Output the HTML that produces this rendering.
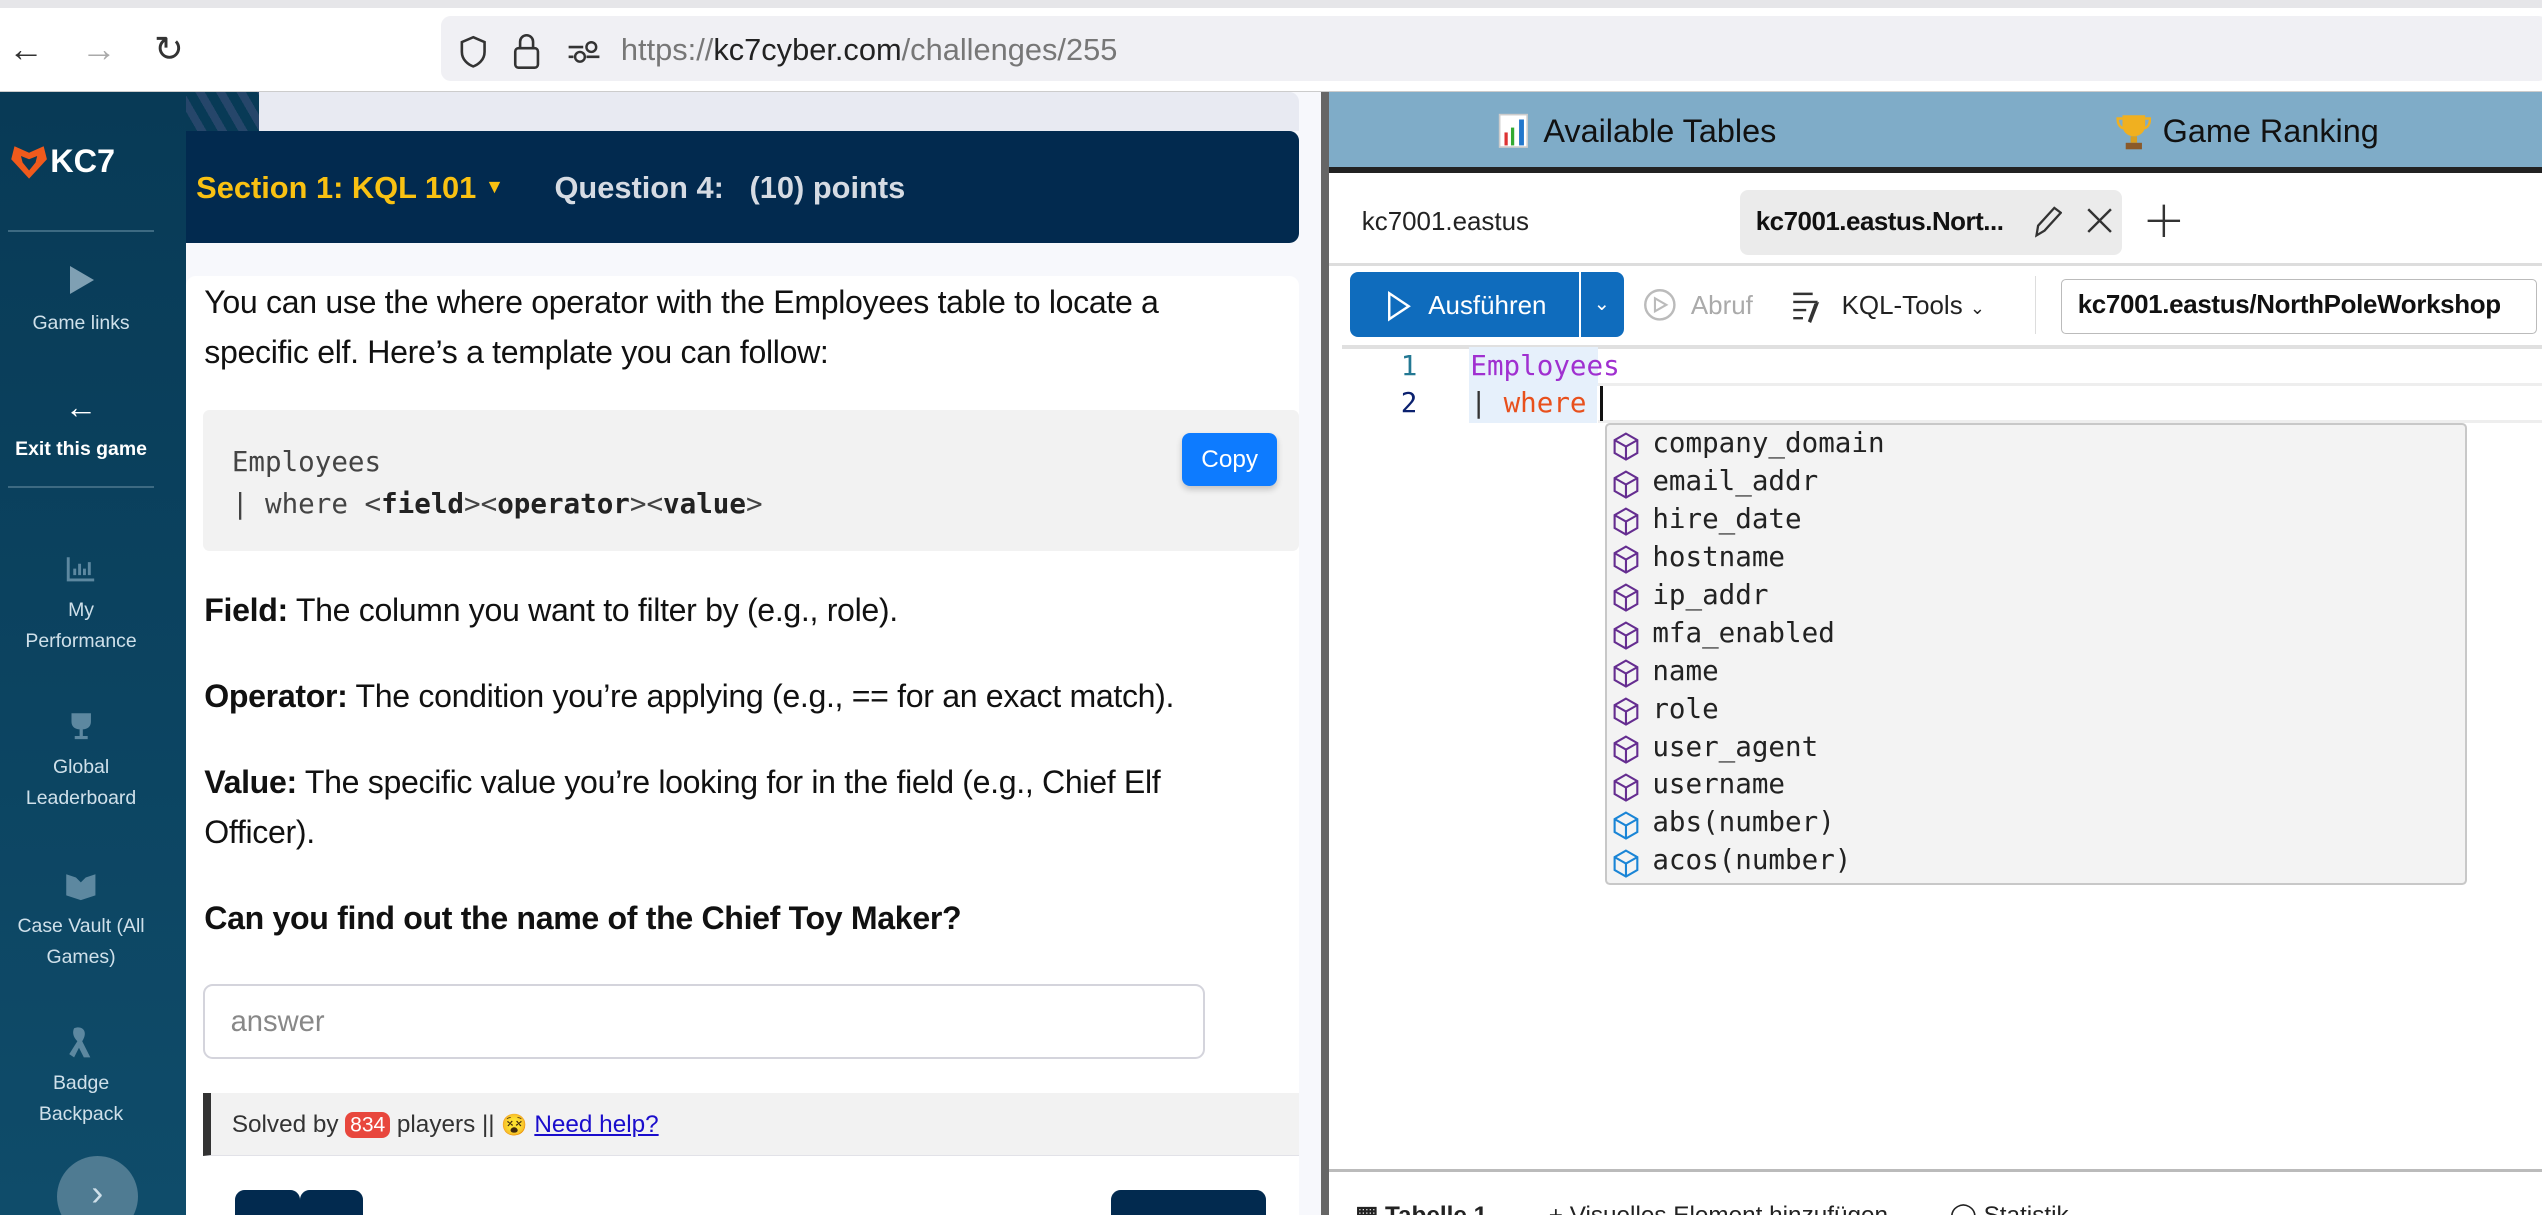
<!DOCTYPE html>
<html><head><meta charset="utf-8"><style>
*{margin:0;padding:0;box-sizing:border-box}
html,body{width:2542px;height:1215px;overflow:hidden;background:#fff}
#r{zoom:1.62117;width:1568px;height:750px;position:relative;font-family:"Liberation Sans",sans-serif;overflow:hidden}
.a{position:absolute}
.mono{font-family:"DejaVu Sans Mono","Liberation Mono",monospace}
.sb{color:#cfe0ea;font-size:12px;text-align:center;width:100px;line-height:19px}
.ac div{height:23.4px;line-height:23px;font-size:17px;color:#222;padding-left:28px;position:relative}
.ac svg{position:absolute;left:4px;top:4px}
p.t{font-size:19.8px;line-height:31px;color:#111;letter-spacing:-.2px}
</style></head><body><div id="r">
<!-- browser chrome -->
<div class="a" style="left:0;top:0;width:1568px;height:5px;background:#e6e6e9"></div>
<div class="a" style="left:0;top:56px;width:1568px;height:1px;background:#ccc"></div>
<div class="a" style="left:5px;top:18px;font-size:22px;color:#333">&#8592;</div>
<div class="a" style="left:50px;top:18px;font-size:22px;color:#aaa">&#8594;</div>
<div class="a" style="left:95px;top:18px;font-size:22px;color:#333">&#8635;</div>
<div class="a" style="left:272px;top:10px;width:1300px;height:40px;background:#f0f0f4;border-radius:6px"></div>
<svg class="a" style="left:282px;top:21px" width="20" height="22"><path d="M10 2 L17 5 V11 C17 16 13 19 10 20 C7 19 3 16 3 11 V5 Z" fill="none" stroke="#333" stroke-width="1.6"/></svg>
<svg class="a" style="left:316px;top:20px" width="18" height="24"><rect x="2" y="10" width="14" height="12" rx="2" fill="none" stroke="#333" stroke-width="1.6"/><path d="M5 10 V6 a4 4 0 0 1 8 0 V10" fill="none" stroke="#333" stroke-width="1.6"/></svg>
<svg class="a" style="left:350px;top:24px" width="22" height="16"><path d="M1 5 H10 M1 11 H4 M12 11 H20" stroke="#333" stroke-width="1.6"/><circle cx="15" cy="5" r="3" fill="none" stroke="#333" stroke-width="1.5"/><circle cx="8" cy="11" r="3" fill="none" stroke="#333" stroke-width="1.5"/></svg>
<div class="a" style="left:383px;top:20px;font-size:19px;color:#777">https://<span style="color:#222">kc7cyber.com</span>/challenges/255</div>
<!-- sidebar -->
<div class="a" style="left:0;top:57px;width:115px;height:693px;background:linear-gradient(#083a56,#0f4c6a)"></div>
<svg class="a" style="left:5px;top:88px" width="26" height="24"><path d="M4 2 L13 6 L22 2 L24 10 L13 22 L2 10 Z" fill="#f05a1c"/><path d="M8 8 L13 10 L18 8 L17 12 L13 17 L9 12Z" fill="#083a56"/></svg>
<div class="a" style="left:31px;top:88px;font-size:20px;font-weight:bold;color:#fff">KC7</div>
<div class="a" style="left:5px;top:142px;width:90px;height:1px;background:#3d6a82"></div>
<div class="a" style="left:43px;top:164px;width:0;height:0;border-left:15px solid #7fa0b3;border-top:9px solid transparent;border-bottom:9px solid transparent"></div>
<div class="a sb" style="top:190px">Game links</div>
<div class="a" style="left:40px;top:240px;font-size:20px;color:#fff">&#8592;</div>
<div class="a sb" style="top:268px;color:#fff;font-weight:bold">Exit this game</div>
<div class="a" style="left:5px;top:300px;width:90px;height:1px;background:#3d6a82"></div>
<svg class="a" style="left:40px;top:342px" width="20" height="18"><path d="M2 2 V16 H18 M6 13 V9 M9 13 V6 M12 13 V9 M15 13 V5" stroke="#5d88a0" stroke-width="1.8" fill="none"/></svg>
<div class="a sb" style="top:367px">My<br>Performance</div>
<svg class="a" style="left:40px;top:438px" width="20" height="20"><path d="M4 2 H16 V7 C16 11 13 12 10 12 C7 12 4 11 4 7Z M9 12 H11 V16 H14 V18 H6 V16 H9Z" fill="#5d88a0"/></svg>
<div class="a sb" style="top:464px">Global<br>Leaderboard</div>
<svg class="a" style="left:39px;top:537px" width="22" height="20"><path d="M2 2 L8 4 L11 7 L14 4 L20 2 V15 L11 18 L2 15Z" fill="#5d88a0"/></svg>
<div class="a sb" style="top:562px">Case Vault (All<br>Games)</div>
<svg class="a" style="left:41px;top:632px" width="18" height="22"><path d="M5 2 C10 0 14 4 10 10 L15 20 L11 20 L8 14 L5 20 L2 18 L7 10 C4 7 4 4 5 2Z" fill="#5d88a0"/></svg>
<div class="a sb" style="top:659px">Badge<br>Backpack</div>
<div class="a" style="left:35px;top:713px;width:50px;height:50px;border-radius:50%;background:#4f7b92;color:#cfe0ea;font-size:22px;text-align:center;line-height:46px">&#8250;</div>
<!-- left content -->
<div class="a" style="left:115px;top:57px;width:705px;height:693px;background:#f7f8fc"></div>
<div class="a" style="left:115px;top:57px;width:45px;height:24px;background:repeating-linear-gradient(60deg,#083a56 0 6px,#26466a 6px 11px)"></div>
<div class="a" style="left:160px;top:57px;width:641px;height:24px;background:#e8eaf2;border-radius:0 6px 0 0"></div>
<div class="a" style="left:115px;top:81px;width:686px;height:69px;background:#022a4f;border-radius:0 6px 6px 0"></div>
<div class="a" style="left:121px;top:105px;font-size:19px;font-weight:bold;color:#f9c112">Section 1: KQL 101 <span style="font-size:12px;vertical-align:3px">&#9660;</span></div>
<div class="a" style="left:342px;top:105px;font-size:19px;font-weight:bold;color:#d6dbe3">Question 4:&nbsp;&nbsp;&nbsp;(10) points</div>
<div class="a" style="left:115px;top:170px;width:686px;height:580px;background:#fff;border-radius:6px 6px 0 0"></div>
<p class="a t" style="left:126px;top:171px;width:640px">You can use the where operator with the Employees table to locate a specific elf. Here’s a template you can follow:</p>
<div class="a" style="left:125px;top:253px;width:676px;height:87px;background:#f2f2f2;border-radius:4px"></div>
<div class="a mono" style="left:143px;top:272px;font-size:17px;line-height:26px;color:#444">Employees<br>| where &lt;<b style="color:#222">field</b>&gt;&lt;<b style="color:#222">operator</b>&gt;&lt;<b style="color:#222">value</b>&gt;</div>
<div class="a" style="left:729px;top:267px;width:59px;height:33px;background:#0d7bff;border-radius:5px;color:#fff;font-size:15px;text-align:center;line-height:33px;box-shadow:0 2px 4px rgba(0,0,0,.2)">Copy</div>
<p class="a t" style="left:126px;top:361px"><b>Field:</b> The column you want to filter by (e.g., role).</p>
<p class="a t" style="left:126px;top:414px;white-space:nowrap"><b>Operator:</b> The condition you’re applying (e.g., == for an exact match).</p>
<p class="a t" style="left:126px;top:467px;width:640px"><b>Value:</b> The specific value you’re looking for in the field (e.g., Chief Elf Officer).</p>
<p class="a t" style="left:126px;top:551px"><b>Can you find out the name of the Chief Toy Maker?</b></p>
<div class="a" style="left:125px;top:607px;width:618px;height:46px;border:1.5px solid #d4d4dc;border-radius:6px;font-size:18px;color:#888;padding:12px 16px">answer</div>
<div class="a" style="left:125px;top:674px;width:676px;height:39px;background:#f2f2f2;border-left:5px solid #333;border-bottom:1px solid #e2e2e8"></div>
<div class="a" style="left:143px;top:685px;font-size:15px;color:#333">Solved by <span style="background:#e8473d;color:#fff;border-radius:5px;padding:1px 3px;font-size:13px">834</span> players || <span style="font-size:13px">😵</span> <span style="color:#1a0dcc;text-decoration:underline">Need help?</span></div>
<div class="a" style="left:145px;top:734px;width:40px;height:30px;background:#022a4f;border-radius:6px"></div>
<div class="a" style="left:185px;top:734px;width:39px;height:30px;background:#022a4f;border-radius:6px"></div>
<div class="a" style="left:685px;top:734px;width:96px;height:30px;background:#022a4f;border-radius:6px"></div>
<!-- divider -->
<div class="a" style="left:815px;top:57px;width:5px;height:693px;background:#666"></div>
<!-- right panel -->
<div class="a" style="left:820px;top:57px;width:748px;height:46px;background:#7facc8"></div>
<div class="a" style="left:820px;top:103px;width:748px;height:4px;background:#222"></div>
<svg class="a" style="left:924px;top:70px" width="20" height="22"><rect x="1" y="1" width="17" height="20" fill="#fff" stroke="#ccc"/><rect x="4" y="12" width="2" height="8" fill="#d33"/><rect x="8" y="9" width="2" height="11" fill="#3a3"/><rect x="13" y="4" width="3" height="16" fill="#27c"/></svg>
<div class="a" style="left:952px;top:70px;font-size:20px;color:#111">Available Tables</div>
<svg class="a" style="left:1305px;top:69px" width="22" height="24"><path d="M4 2 H18 V8 C18 13 14 15 11 15 C8 15 4 13 4 8Z" fill="#f0b020"/><path d="M4 4 H1 C1 8 3 10 5 10 M18 4 H21 C21 8 19 10 17 10" stroke="#f0b020" stroke-width="1.5" fill="none"/><rect x="9" y="15" width="4" height="4" fill="#d8a020"/><rect x="6" y="19" width="10" height="4" fill="#8a5a2a"/></svg>
<div class="a" style="left:1334px;top:70px;font-size:20px;color:#111">Game Ranking</div>
<div class="a" style="left:840px;top:128px;font-size:16px;color:#222">kc7001.eastus</div>
<div class="a" style="left:1073px;top:117px;width:236px;height:40px;background:#ebebeb;border-radius:5px"></div>
<div class="a" style="left:1083px;top:128px;font-size:16px;color:#111;font-weight:bold;letter-spacing:-.3px">kc7001.eastus.Nort...</div>
<svg class="a" style="left:1252px;top:125px" width="20" height="22"><path d="M4 20 L5 14 L15 3 L19 6 L9 17Z M4 20 L9 17" fill="none" stroke="#333" stroke-width="1.4"/></svg>
<svg class="a" style="left:1286px;top:127px" width="18" height="18"><path d="M2 2 L16 16 M16 2 L2 16" stroke="#333" stroke-width="1.5"/></svg>
<svg class="a" style="left:1324px;top:125px" width="22" height="22"><path d="M11 1 V21 M1 11 H21" stroke="#333" stroke-width="1.5"/></svg>
<div class="a" style="left:820px;top:162px;width:748px;height:2px;background:#ddd"></div>
<div class="a" style="left:833px;top:168px;width:169px;height:40px;background:#0f6cbd;border-radius:5px"></div>
<div class="a" style="left:974px;top:168px;width:1px;height:40px;background:#fff"></div>
<svg class="a" style="left:855px;top:179px" width="16" height="20"><path d="M2 2 L14 10 L2 18Z" fill="none" stroke="#fff" stroke-width="1.5"/></svg>
<div class="a" style="left:881px;top:180px;font-size:16px;color:#fff">Ausführen</div>
<div class="a" style="left:983px;top:180px;font-size:12px;color:#fff">&#8964;</div>
<svg class="a" style="left:1013px;top:177px" width="22" height="22"><circle cx="11" cy="11" r="9" fill="none" stroke="#bbb" stroke-width="1.5"/><path d="M8 7 L15 11 L8 15Z" fill="none" stroke="#bbb" stroke-width="1.3"/></svg>
<div class="a" style="left:1043px;top:180px;font-size:16px;color:#aaa">Abruf</div>
<svg class="a" style="left:1104px;top:178px" width="24" height="24"><path d="M2 3 H14 M2 8 H17 M2 13 H10 M2 18 H8" stroke="#333" stroke-width="1.5"/><path d="M18 8 L13 21 L11 20 L15 9Z" fill="#333"/></svg>
<div class="a" style="left:1136px;top:180px;font-size:16px;color:#222">KQL-Tools <span style="font-size:11px">&#8964;</span></div>
<div class="a" style="left:1255px;top:170px;width:1px;height:36px;background:#ddd"></div>
<div class="a" style="left:1271px;top:172px;width:294px;height:34px;border:1px solid #bbb;border-radius:3px;font-size:16px;font-weight:bold;color:#111;padding:7px 10px;white-space:nowrap;letter-spacing:-.2px">kc7001.eastus/NorthPoleWorkshop</div>
<div class="a" style="left:828px;top:213px;width:740px;height:2px;background:#e0e0e0"></div>
<!-- editor -->
<div class="a" style="left:906px;top:214px;width:80px;height:24px;background:#e6f0fb"></div>
<div class="a" style="left:986px;top:236px;width:582px;height:2px;background:#eee"></div>
<div class="a" style="left:906px;top:238px;width:79px;height:23px;background:#e6f0fb"></div>
<div class="a" style="left:986px;top:259px;width:582px;height:2px;background:#eee"></div>
<div class="a mono" style="left:864px;top:214px;font-size:17px;line-height:23.5px;color:#237893">1</div>
<div class="a mono" style="left:864px;top:237px;font-size:17px;line-height:23.5px;color:#0b216f">2</div>
<div class="a mono" style="left:907px;top:214px;font-size:17px;line-height:23.5px;color:#a030d0">Employees</div>
<div class="a mono" style="left:907px;top:237px;font-size:17px;line-height:23.5px;color:#333">| <span style="color:#e8501c">where</span></div>
<div class="a" style="left:987px;top:238px;width:2px;height:22px;background:#111"></div>
<div class="ac a mono" style="left:990px;top:261px;width:532px;height:285px;background:#f3f3f3;border:1.5px solid #c8c8c8;border-radius:3px;padding-top:0">
<div><svg width="16" height="18"><path d="M8 1 L15 5 V13 L8 17 L1 13 V5Z M1 5 L8 9 L15 5 M8 9 V17" fill="none" stroke="#652d90" stroke-width="1.3"/></svg>company_domain</div>
<div><svg width="16" height="18"><path d="M8 1 L15 5 V13 L8 17 L1 13 V5Z M1 5 L8 9 L15 5 M8 9 V17" fill="none" stroke="#652d90" stroke-width="1.3"/></svg>email_addr</div>
<div><svg width="16" height="18"><path d="M8 1 L15 5 V13 L8 17 L1 13 V5Z M1 5 L8 9 L15 5 M8 9 V17" fill="none" stroke="#652d90" stroke-width="1.3"/></svg>hire_date</div>
<div><svg width="16" height="18"><path d="M8 1 L15 5 V13 L8 17 L1 13 V5Z M1 5 L8 9 L15 5 M8 9 V17" fill="none" stroke="#652d90" stroke-width="1.3"/></svg>hostname</div>
<div><svg width="16" height="18"><path d="M8 1 L15 5 V13 L8 17 L1 13 V5Z M1 5 L8 9 L15 5 M8 9 V17" fill="none" stroke="#652d90" stroke-width="1.3"/></svg>ip_addr</div>
<div><svg width="16" height="18"><path d="M8 1 L15 5 V13 L8 17 L1 13 V5Z M1 5 L8 9 L15 5 M8 9 V17" fill="none" stroke="#652d90" stroke-width="1.3"/></svg>mfa_enabled</div>
<div><svg width="16" height="18"><path d="M8 1 L15 5 V13 L8 17 L1 13 V5Z M1 5 L8 9 L15 5 M8 9 V17" fill="none" stroke="#652d90" stroke-width="1.3"/></svg>name</div>
<div><svg width="16" height="18"><path d="M8 1 L15 5 V13 L8 17 L1 13 V5Z M1 5 L8 9 L15 5 M8 9 V17" fill="none" stroke="#652d90" stroke-width="1.3"/></svg>role</div>
<div><svg width="16" height="18"><path d="M8 1 L15 5 V13 L8 17 L1 13 V5Z M1 5 L8 9 L15 5 M8 9 V17" fill="none" stroke="#652d90" stroke-width="1.3"/></svg>user_agent</div>
<div><svg width="16" height="18"><path d="M8 1 L15 5 V13 L8 17 L1 13 V5Z M1 5 L8 9 L15 5 M8 9 V17" fill="none" stroke="#652d90" stroke-width="1.3"/></svg>username</div>
<div><svg width="16" height="18"><path d="M8 1 L15 5 V13 L8 17 L1 13 V5Z M1 5 L8 9 L15 5 M8 9 V17" fill="none" stroke="#1a85d6" stroke-width="1.3"/></svg>abs(number)</div>
<div><svg width="16" height="18"><path d="M8 1 L15 5 V13 L8 17 L1 13 V5Z M1 5 L8 9 L15 5 M8 9 V17" fill="none" stroke="#1a85d6" stroke-width="1.3"/></svg>acos(number)</div>
</div>
<div class="a" style="left:820px;top:721px;width:748px;height:2px;background:#bbb"></div>
<div class="a" style="left:836px;top:740px;font-size:15px;color:#222"><b>&#9638; Tabelle 1</b><span style="margin-left:38px">+ Visuelles Element hinzufügen</span><span style="margin-left:38px">&#9711; Statistik</span></div>
</div></body></html>
